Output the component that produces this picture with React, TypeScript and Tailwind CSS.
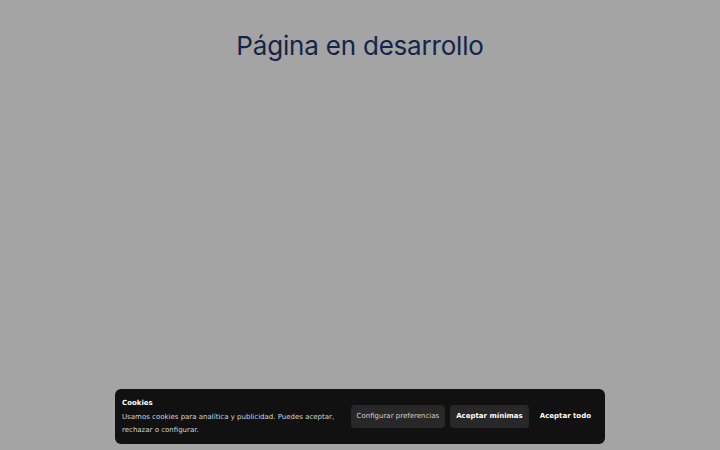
export default function App() {
  return (
    <div className="relative h-[450px] w-full overflow-hidden bg-[#a4a4a4] font-['DejaVu_Sans',sans-serif]">
      <div className="flex justify-center pt-[30px]">
        <h1 className="font-['Inter',sans-serif] text-[26px] font-normal leading-[32px] tracking-[-0.2px] text-[#13254a]">
          Página en desarrollo
        </h1>
      </div>

      {/* Cookie banner */}
      <div className="absolute bottom-[6px] left-[115px] flex h-[55px] w-[490px] items-center justify-between rounded-[6px] bg-[#111111] pl-[7px] pr-[14px]">
        <div className="flex flex-col">
          <p className="text-[7px] font-bold leading-[12px] text-white">Cookies</p>
          <p className="mt-[2px] w-[220px] text-[7px] leading-[12.5px] text-[#d4d4d4]">
            Usamos cookies para analítica y publicidad. Puedes aceptar, rechazar o configurar.
          </p>
        </div>
        <div className="flex items-center gap-[5px] whitespace-nowrap">
          <button className="h-[23px] rounded-[4px] bg-[#282828] px-[6px] text-[7px] text-[#cfcfcf]">
            Configurar preferencias
          </button>
          <button className="h-[23px] rounded-[4px] bg-[#282828] px-[6px] text-[7px] font-bold text-white">
            Aceptar mínimas
          </button>
          <button className="h-[23px] pl-[6px] text-[7px] font-bold text-white">Aceptar todo</button>
        </div>
      </div>
    </div>
  );
}
